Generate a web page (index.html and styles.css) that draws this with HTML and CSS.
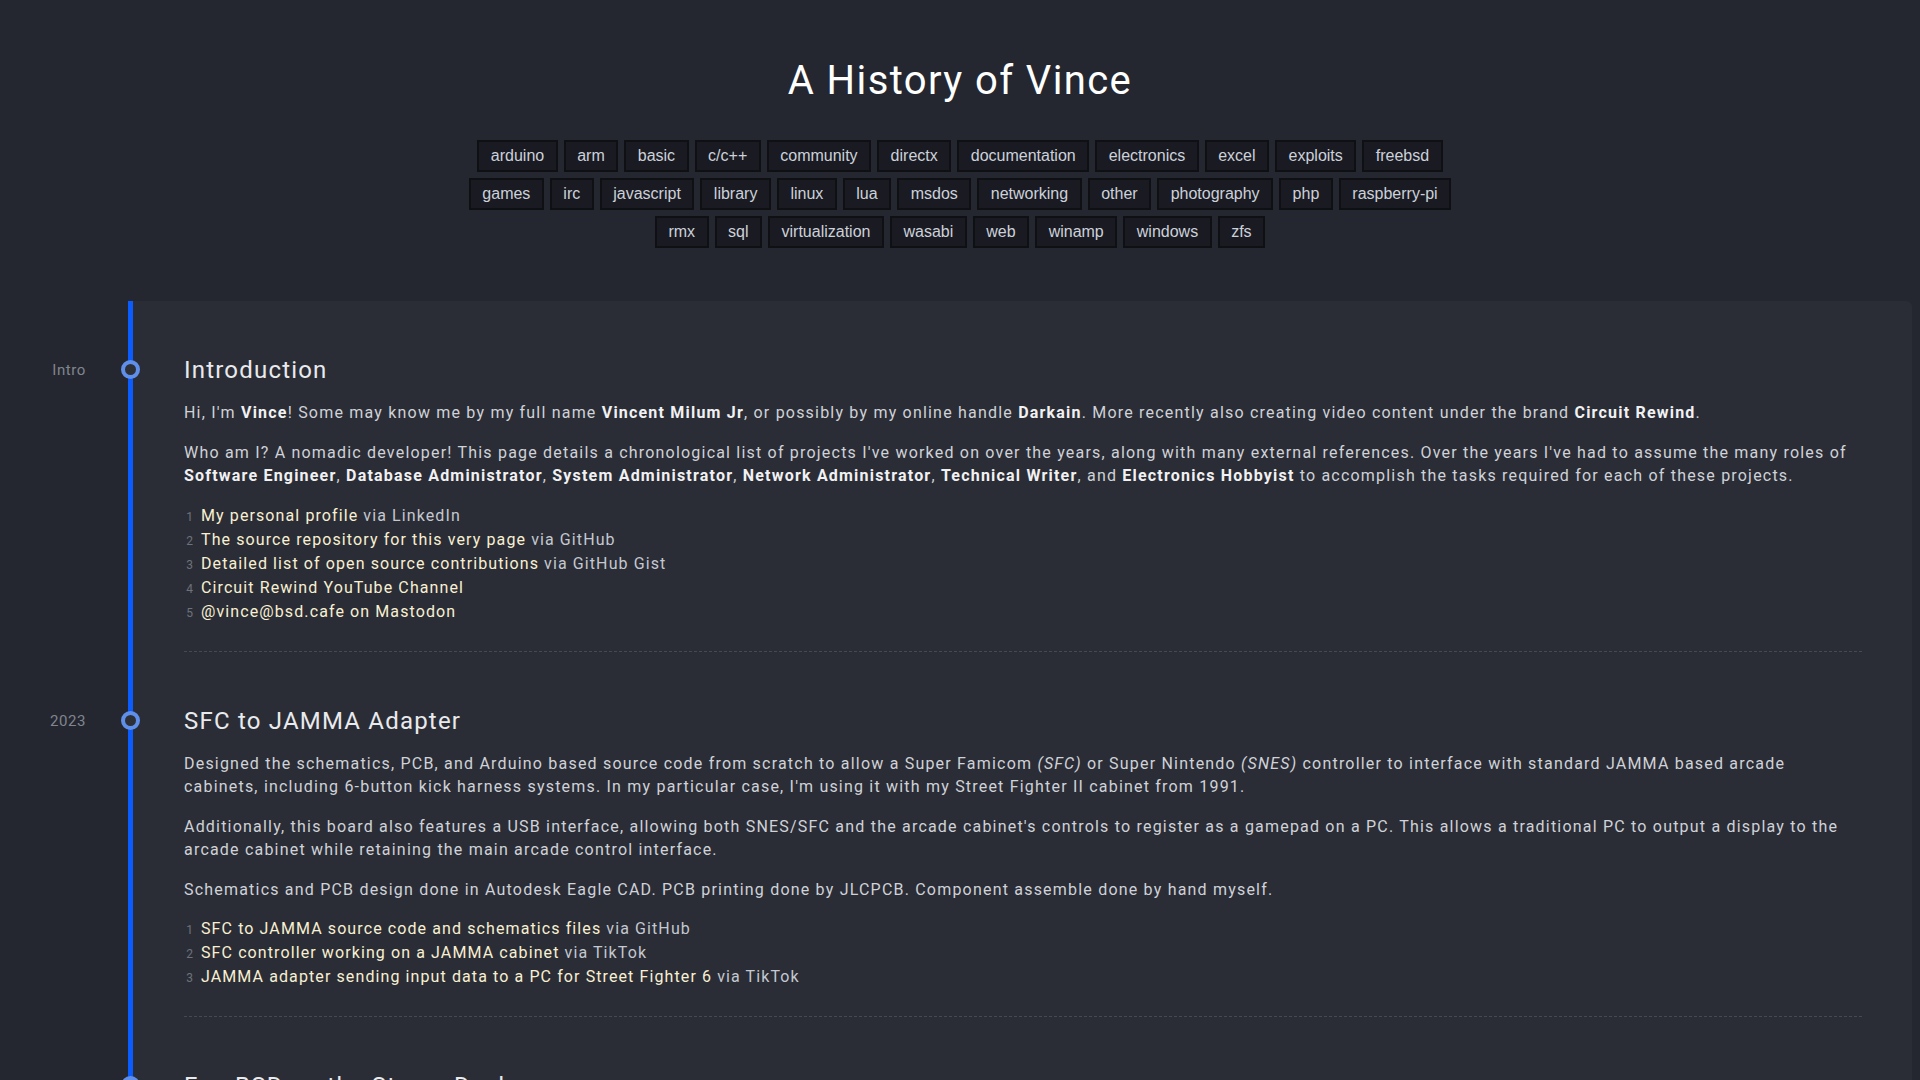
FILE: index.html
```html
<!DOCTYPE html>
<html lang="en">
<head>
<meta charset="utf-8">
<title>A History of Vince</title>
<link rel="stylesheet" href="styles.css">
</head>
<body>
<header class="page-header">
  <h1 class="title">A History of Vince</h1>
  <nav class="tags">
    <span class="tag">arduino</span><span class="tag">arm</span><span class="tag">basic</span><span class="tag">c/c++</span><span class="tag">community</span><span class="tag">directx</span><span class="tag">documentation</span><span class="tag">electronics</span><span class="tag">excel</span><span class="tag">exploits</span><span class="tag">freebsd</span>
    <span class="tag">games</span><span class="tag">irc</span><span class="tag">javascript</span><span class="tag">library</span><span class="tag">linux</span><span class="tag">lua</span><span class="tag">msdos</span><span class="tag">networking</span><span class="tag">other</span><span class="tag">photography</span><span class="tag">php</span><span class="tag">raspberry-pi</span>
    <span class="tag">rmx</span><span class="tag">sql</span><span class="tag">virtualization</span><span class="tag">wasabi</span><span class="tag">web</span><span class="tag">winamp</span><span class="tag">windows</span><span class="tag">zfs</span>
  </nav>
</header>

<main class="timeline">
  <section class="entry">
    <span class="date">Intro</span>
    <span class="dot"></span>
    <div class="entry-body">
      <h2 class="entry-title">Introduction</h2>
      <p>Hi, I'm <b>Vince</b>! Some may know me by my full name <b>Vincent Milum Jr</b>, or possibly by my online handle <b>Darkain</b>. More recently also creating video content under the brand <b>Circuit Rewind</b>.</p>
      <p>Who am I? A nomadic developer! This page details a chronological list of projects I've worked on over the years, along with many external references. Over the years I've had to assume the many roles of <b>Software Engineer</b>, <b>Database Administrator</b>, <b>System Administrator</b>, <b>Network Administrator</b>, <b>Technical Writer</b>, and <b>Electronics Hobbyist</b> to accomplish the tasks required for each of these projects.</p>
      <ol class="refs">
        <li><a href="#">My personal profile</a> via LinkedIn</li>
        <li><a href="#">The source repository for this very page</a> via GitHub</li>
        <li><a href="#">Detailed list of open source contributions</a> via GitHub Gist</li>
        <li><a href="#">Circuit Rewind YouTube Channel</a></li>
        <li><a href="#">@vince@bsd.cafe on Mastodon</a></li>
      </ol>
    </div>
  </section>

  <section class="entry">
    <span class="date">2023</span>
    <span class="dot"></span>
    <div class="entry-body">
      <h2 class="entry-title">SFC to JAMMA Adapter</h2>
      <p>Designed the schematics, PCB, and Arduino based source code from scratch to allow a Super Famicom <i>(SFC)</i> or Super Nintendo <i>(SNES)</i> controller to interface with standard JAMMA based arcade cabinets, including 6-button kick harness systems. In my particular case, I'm using it with my Street Fighter II cabinet from 1991.</p>
      <p>Additionally, this board also features a USB interface, allowing both SNES/SFC and the arcade cabinet's controls to register as a gamepad on a PC. This allows a traditional PC to output a display to the arcade cabinet while retaining the main arcade control interface.</p>
      <p>Schematics and PCB design done in Autodesk Eagle CAD. PCB printing done by JLCPCB. Component assemble done by hand myself.</p>
      <ol class="refs">
        <li><a href="#">SFC to JAMMA source code and schematics files</a> via GitHub</li>
        <li><a href="#">SFC controller working on a JAMMA cabinet</a> via TikTok</li>
        <li><a href="#">JAMMA adapter sending input data to a PC for Street Fighter 6</a> via TikTok</li>
      </ol>
    </div>
  </section>

  <section class="entry">
    <span class="date">2023</span>
    <span class="dot"></span>
    <div class="entry-body">
      <h2 class="entry-title">FreeBSD on the Steam Deck</h2>
      <p>Getting FreeBSD up and running on the Valve Steam Deck handheld gaming PC.</p>
    </div>
  </section>
</main>
</body>
</html>
```

FILE: styles.css
```css
html, body {
  margin: 0;
  padding: 0;
}

body {
  background: #252730;
  color: #cfd2d8;
  font-family: Roboto, "Liberation Sans", sans-serif;
  overflow: hidden;
}

.page-header {
  padding-top: 57px;
  display: flex;
  flex-direction: column;
  align-items: center;
}

.title {
  margin: 0;
  font-family: Roboto, "Noto Sans", sans-serif;
  font-weight: 400;
  font-size: 40px;
  line-height: 48px;
  letter-spacing: 1.4px;
  color: #ffffff;
}

.tags {
  margin-top: 35px;
  max-width: 1000px;
  display: flex;
  flex-wrap: wrap;
  justify-content: center;
  gap: 6px;
}

.tag {
  font-family: "Liberation Sans", Arial, sans-serif;
  font-size: 16px;
  line-height: 28px;
  padding: 0 11.5px;
  color: #ccd1da;
  background: #1a1b22;
  border: 2px solid #0f1014;
}

.timeline {
  margin: 53px 8px 0 128px;
  background: #2b2d36;
  border-left: 5px solid #0b5cff;
  border-radius: 0 6px 6px 0;
}

.entry {
  position: relative;
  padding: 54px 50px 0 51px;
}

.entry-body {
  border-bottom: 1px dashed #464952;
  padding-bottom: 27px;
}

.date {
  position: absolute;
  top: 54px;
  right: calc(100% + 47px);
  line-height: 30px;
  font-family: Roboto, sans-serif;
  font-size: 15px;
  letter-spacing: 0.6px;
  color: #80858f;
}

.dot {
  position: absolute;
  top: 59px;
  left: -12px;
  width: 11px;
  height: 11px;
  border: 4px solid #5f8fe8;
  border-radius: 50%;
  background: #2e3038;
}

.entry-title {
  margin: 0 0 16px;
  font-family: Roboto, sans-serif;
  font-weight: 400;
  font-size: 24px;
  line-height: 30px;
  letter-spacing: 1.2px;
  color: #e9eaed;
}

p {
  margin: 0 0 16px;
  font-size: 16px;
  line-height: 23.5px;
  letter-spacing: 1.2px;
}

b {
  font-weight: 700;
  color: #f1f1f3;
}

i {
  font-style: italic;
}

.refs {
  list-style: none;
  counter-reset: ref;
  margin: 0;
  padding: 0;
  font-size: 16px;
  line-height: 24px;
  letter-spacing: 1.1px;
  color: #c4c8d0;
}

.refs li {
  counter-increment: ref;
  height: 24px;
}

.refs li::before {
  content: counter(ref);
  display: inline-block;
  width: 9px;
  padding-right: 8px;
  text-align: right;
  font-size: 12px;
  line-height: 12px;
  letter-spacing: 0;
  color: #6d727c;
}

.refs a {
  color: #f8f0d2;
  text-decoration: none;
}
```
